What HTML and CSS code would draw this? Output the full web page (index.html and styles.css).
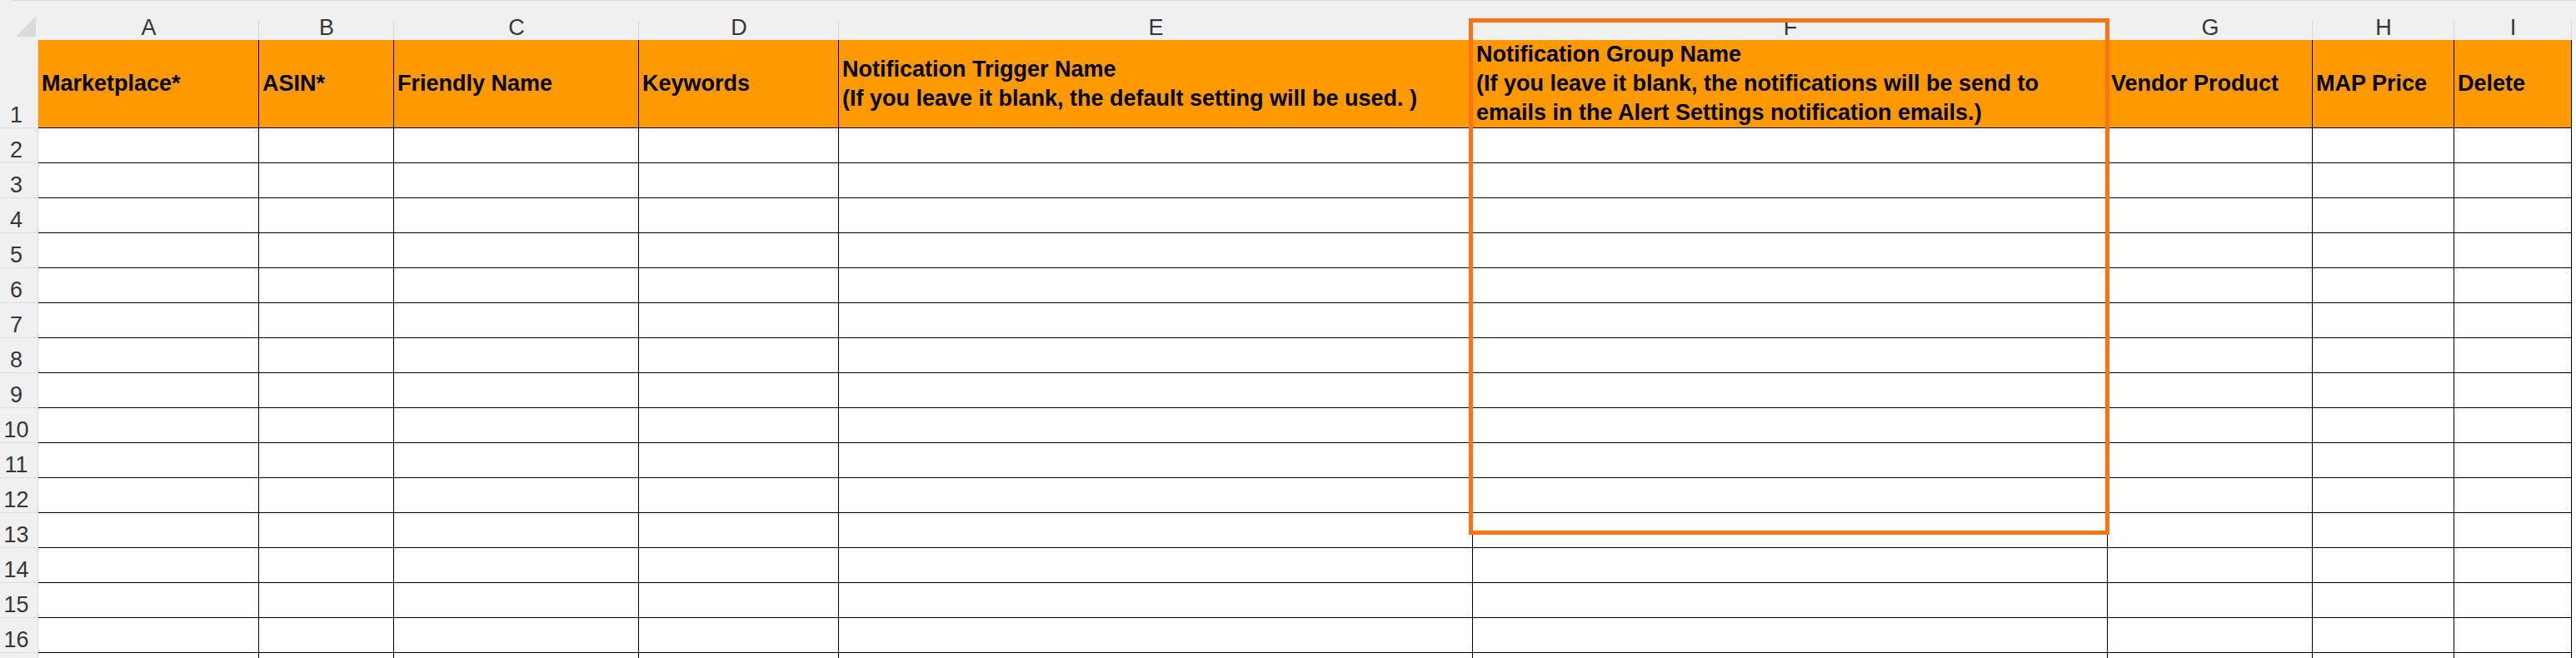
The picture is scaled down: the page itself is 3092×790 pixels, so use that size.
FILE: index.html
```html
<!DOCTYPE html>
<html lang="en">
<head>
<meta charset="utf-8">
<title>Sheet</title>
<link rel="stylesheet" href="styles.css">
</head>
<body>
<div class="sheet">
  <div class="colheads">
    <div class="corner"><svg width="46" height="48" viewBox="0 0 46 48"><polygon points="43,20 43,44 19,44" fill="#dadada"/></svg></div>
    <div class="cl">A</div><div class="cl">B</div><div class="cl">C</div><div class="cl">D</div><div class="cl">E</div><div class="cl">F</div><div class="cl">G</div><div class="cl">H</div><div class="cl">I</div><div class="cl tail"></div>
  </div>
  <div class="row r1">
    <div class="rh">1</div>
    <div class="hc">Marketplace*</div>
    <div class="hc">ASIN*</div>
    <div class="hc">Friendly Name</div>
    <div class="hc">Keywords</div>
    <div class="hc">Notification Trigger Name<br>(If you leave it blank, the default setting will be used. )</div>
    <div class="hc">Notification Group Name<br>(If you leave it blank, the notifications will be send to<br>emails in the Alert Settings notification emails.)</div>
    <div class="hc">Vendor Product</div>
    <div class="hc">MAP Price</div>
    <div class="hc">Delete</div>
    <div class="tail"></div>
  </div>
  <div class="row"><div class="rh">2</div><div class="c"></div><div class="c"></div><div class="c"></div><div class="c"></div><div class="c"></div><div class="c"></div><div class="c"></div><div class="c"></div><div class="c"></div><div class="tail"></div></div>
  <div class="row"><div class="rh">3</div><div class="c"></div><div class="c"></div><div class="c"></div><div class="c"></div><div class="c"></div><div class="c"></div><div class="c"></div><div class="c"></div><div class="c"></div><div class="tail"></div></div>
  <div class="row"><div class="rh">4</div><div class="c"></div><div class="c"></div><div class="c"></div><div class="c"></div><div class="c"></div><div class="c"></div><div class="c"></div><div class="c"></div><div class="c"></div><div class="tail"></div></div>
  <div class="row"><div class="rh">5</div><div class="c"></div><div class="c"></div><div class="c"></div><div class="c"></div><div class="c"></div><div class="c"></div><div class="c"></div><div class="c"></div><div class="c"></div><div class="tail"></div></div>
  <div class="row"><div class="rh">6</div><div class="c"></div><div class="c"></div><div class="c"></div><div class="c"></div><div class="c"></div><div class="c"></div><div class="c"></div><div class="c"></div><div class="c"></div><div class="tail"></div></div>
  <div class="row"><div class="rh">7</div><div class="c"></div><div class="c"></div><div class="c"></div><div class="c"></div><div class="c"></div><div class="c"></div><div class="c"></div><div class="c"></div><div class="c"></div><div class="tail"></div></div>
  <div class="row"><div class="rh">8</div><div class="c"></div><div class="c"></div><div class="c"></div><div class="c"></div><div class="c"></div><div class="c"></div><div class="c"></div><div class="c"></div><div class="c"></div><div class="tail"></div></div>
  <div class="row"><div class="rh">9</div><div class="c"></div><div class="c"></div><div class="c"></div><div class="c"></div><div class="c"></div><div class="c"></div><div class="c"></div><div class="c"></div><div class="c"></div><div class="tail"></div></div>
  <div class="row"><div class="rh">10</div><div class="c"></div><div class="c"></div><div class="c"></div><div class="c"></div><div class="c"></div><div class="c"></div><div class="c"></div><div class="c"></div><div class="c"></div><div class="tail"></div></div>
  <div class="row"><div class="rh">11</div><div class="c"></div><div class="c"></div><div class="c"></div><div class="c"></div><div class="c"></div><div class="c"></div><div class="c"></div><div class="c"></div><div class="c"></div><div class="tail"></div></div>
  <div class="row"><div class="rh">12</div><div class="c"></div><div class="c"></div><div class="c"></div><div class="c"></div><div class="c"></div><div class="c"></div><div class="c"></div><div class="c"></div><div class="c"></div><div class="tail"></div></div>
  <div class="row"><div class="rh">13</div><div class="c"></div><div class="c"></div><div class="c"></div><div class="c"></div><div class="c"></div><div class="c"></div><div class="c"></div><div class="c"></div><div class="c"></div><div class="tail"></div></div>
  <div class="row"><div class="rh">14</div><div class="c"></div><div class="c"></div><div class="c"></div><div class="c"></div><div class="c"></div><div class="c"></div><div class="c"></div><div class="c"></div><div class="c"></div><div class="tail"></div></div>
  <div class="row"><div class="rh">15</div><div class="c"></div><div class="c"></div><div class="c"></div><div class="c"></div><div class="c"></div><div class="c"></div><div class="c"></div><div class="c"></div><div class="c"></div><div class="tail"></div></div>
  <div class="row"><div class="rh">16</div><div class="c"></div><div class="c"></div><div class="c"></div><div class="c"></div><div class="c"></div><div class="c"></div><div class="c"></div><div class="c"></div><div class="c"></div><div class="tail"></div></div>
  <div class="row"><div class="rh"></div><div class="c"></div><div class="c"></div><div class="c"></div><div class="c"></div><div class="c"></div><div class="c"></div><div class="c"></div><div class="c"></div><div class="c"></div><div class="tail"></div></div>
  <div class="highlight"></div>
</div>
</body>
</html>
```

FILE: styles.css
```css
:root {
  --cols: 46px 265px 162px 294px 240px 761px 762px 246px 170px 141px 5px;
}

* {
  box-sizing: border-box;
}

html, body {
  margin: 0;
  padding: 0;
  background: #ffffff;
  overflow: hidden;
}

body {
  font-family: "Liberation Sans", Arial, sans-serif;
}

.sheet {
  position: relative;
  width: 3092px;
  height: 790px;
  overflow: hidden;
}

.colheads {
  display: grid;
  grid-template-columns: var(--cols);
  height: 48px;
  background: #f0f0f0 linear-gradient(#d9d9d9, #d9d9d9) 16px 0 / 100% 1px no-repeat;
}

.corner {
  display: flex;
}

.cl {
  display: flex;
  align-items: flex-end;
  justify-content: center;
  font-size: 27px;
  line-height: 30px;
  color: #363636;
  background: linear-gradient(#d8d8d8, #d8d8d8) right bottom / 1px 23px no-repeat;
}

.cl.tail {
  background: none;
}

.row {
  display: grid;
  grid-template-columns: var(--cols);
  height: 42px;
}

.row.r1 {
  height: 106px;
}

.rh {
  display: flex;
  align-items: flex-end;
  justify-content: center;
  padding-right: 6px;
  background: #f0f0f0;
  border-right: 1px solid #d6d6d6;
  border-bottom: 1px solid #dedede;
  font-size: 27px;
  line-height: 30px;
  color: #363636;
}

.hc {
  display: flex;
  align-items: center;
  padding-left: 4px;
  background: #ff9900;
  border-right: 1px solid #000;
  border-bottom: 1px solid #000;
  font-size: 27px;
  font-weight: bold;
  line-height: 35px;
  color: #000;
  white-space: nowrap;
  overflow: hidden;
}

.c {
  background: #fff;
  border-right: 1px solid #000;
  border-bottom: 1px solid #000;
}

.tail {
  background: #fff;
}

.highlight {
  position: absolute;
  left: 1763px;
  top: 22px;
  width: 769px;
  height: 620px;
  border: 5px solid #fa7414;
  pointer-events: none;
}
```
